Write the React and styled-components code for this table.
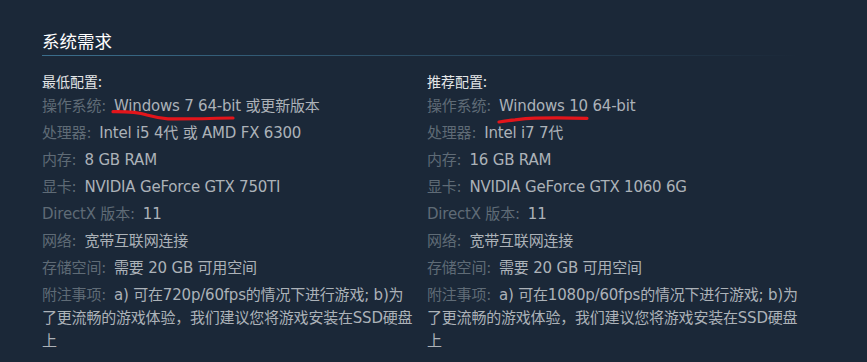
import React from 'react';
import styled, { createGlobalStyle } from 'styled-components';

const GlobalStyle = createGlobalStyle`
  html, body {
    margin: 0;
    padding: 0;
    background: #1b2838;
  }
  body {
    font-family: "DejaVu Sans", "Noto Sans CJK SC", sans-serif;
  }
`;

const minimum = [
  ['操作系统:', 'Windows 7 64-bit', ' 或更新版本', 'left'],
  ['处理器:', 'Intel i5 4代 或 AMD FX 6300'],
  ['内存:', '8 GB RAM'],
  ['显卡:', 'NVIDIA GeForce GTX 750TI'],
  ['DirectX 版本:', '11'],
  ['网络:', '宽带互联网连接'],
  ['存储空间:', '需要 20 GB 可用空间'],
  ['附注事项:', 'a) 可在720p/60fps的情况下进行游戏; b)为了更流畅的游戏体验，我们建议您将游戏安装在SSD硬盘上'],
];

const recommended = [
  ['操作系统:', 'Windows 10 64-bit', '', 'right'],
  ['处理器:', 'Intel i7 7代'],
  ['内存:', '16 GB RAM'],
  ['显卡:', 'NVIDIA GeForce GTX 1060 6G'],
  ['DirectX 版本:', '11'],
  ['网络:', '宽带互联网连接'],
  ['存储空间:', '需要 20 GB 可用空间'],
  ['附注事项:', 'a) 可在1080p/60fps的情况下进行游戏; b)为了更流畅的游戏体验，我们建议您将游戏安装在SSD硬盘上'],
];

// hand-drawn red underline strokes, coords relative to the row
const marks = {
  left: 'M71 17.7 C 84 17.6, 96 18.2, 105 21 C 112 23, 118 24.2, 126 24.8 C 150 25, 175 24.4, 191 24',
  right: 'M72 28 C 78 27, 82 26.4, 88 25.8 C 96 24.8, 100 24.4, 108 24.1 C 125 23.6, 145 23.8, 160 24.3',
};

const SysReq = ({ title, rows }) => (
  <Column>
    <ColumnTitle>{title}</ColumnTitle>
    <List>
      {rows.map(([label, value, rest, mark]) => (
        <Item key={label}>
          <Label>{label}</Label>{value}
          {rest}
          {mark && (
            <Scribble viewBox="0 0 220 34" width="220" height="34">
              <path
                d={marks[mark]}
                fill="none"
                stroke="#e3151b"
                strokeWidth="3.2"
                strokeLinecap="round"
              />
            </Scribble>
          )}
        </Item>
      ))}
    </List>
  </Column>
);

export default function App() {
  return (
    <>
      <GlobalStyle />
      <Section>
        <Heading>系统需求</Heading>
        <Columns>
          <SysReq title="最低配置:" rows={minimum} />
          <SysReq title="推荐配置:" rows={recommended} />
        </Columns>
      </Section>
    </>
  );
}

const Section = styled.section`
  width: 867px;
  height: 362px;
  box-sizing: border-box;
  padding: 28px 0 0 42px;
  overflow: hidden;
`;

const Heading = styled.h2`
  margin: 0;
  width: 758px;
  font-family: "Noto Sans CJK SC", sans-serif;
  font-size: 17.5px;
  font-weight: normal;
  line-height: 26px;
  color: #ffffff;
  background-image: linear-gradient(to right, #3b6e8c 0%, rgba(59, 110, 140, 0) 100%);
  background-size: 100% 1px;
  background-repeat: no-repeat;
  background-position: left bottom;
  padding-bottom: 2px;
`;

const Columns = styled.div`
  display: flex;
  gap: 11px;
  margin-top: 14px;
`;

const Column = styled.div`
  width: 374px;
`;

const ColumnTitle = styled.div`
  font-family: "Noto Sans CJK SC", sans-serif;
  font-size: 14px;
  line-height: 22px;
  color: #e4e6e7;
  margin-bottom: 3px;
`;

const List = styled.ul`
  list-style: none;
  margin: 0;
  padding: 0;
`;

const Item = styled.li`
  position: relative;
  font-size: 15px;
  letter-spacing: -0.2px;
  line-height: 23px;
  color: #acb2b8;
  margin-bottom: 4px;
`;

const Label = styled.span`
  color: #5f6b76;
  margin-right: 8px;
`;

const Scribble = styled.svg`
  position: absolute;
  left: 0;
  top: -1px;
  pointer-events: none;
`;
